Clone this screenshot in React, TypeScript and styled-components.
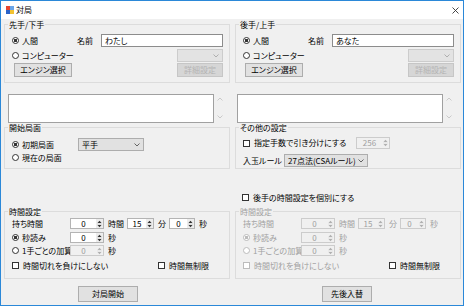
import React from "react";
import styled, { createGlobalStyle } from "styled-components";

const Global = createGlobalStyle`
  html, body { margin: 0; padding: 0; background: #ffffff; }
  body {
    font-family: "Noto Sans CJK JP", "Noto Sans", sans-serif;
    font-size: 8px;
    line-height: 1;
    font-feature-settings: "palt" 1;
    color: #000;
  }
  * { box-sizing: border-box; }
`;

const Window = styled.div`
  width: 464px;
  height: 306px;
  border: 1px solid #2b88d8;
  background: #f0f0f0;
  display: flex;
  flex-direction: column;
`;

const TitleBar = styled.div`
  height: 18px;
  flex: none;
  background: #ffffff;
  display: flex;
  align-items: center;
  padding: 0 4px 0 5px;
`;

const Title = styled.span`
  margin-left: 2px;
  font-size: 8px;
  flex: 1;
`;

const Client = styled.div`
  flex: 1;
  display: grid;
  grid-template-columns: 226px 226px;
  grid-template-rows: 63px 40px 46px 38px 72px 26px;
  column-gap: 5px;
  padding: 1px 2px 0 3px;
`;

const GroupBox = styled.fieldset`
  margin: 0;
  padding: 0 6px 0 7px;
  border: 1px solid #dcdcdc;
  border-radius: 0;
  min-width: 0;
  height: 100%;
`;

const Legend = styled.legend<{ $disabled?: boolean }>`
  padding: 0 1px;
  margin-left: -4px;
  line-height: 9px;
  height: 9px;
  font-size: 8px;
  color: ${(p) => (p.$disabled ? "#a0a0a0" : "#000")};
`;

const Row = styled.div<{ $mt?: number; $h: number }>`
  display: flex;
  align-items: center;
  margin-top: ${(p) => p.$mt ?? 0}px;
  height: ${(p) => p.$h}px;
`;

const Opt = styled.span<{ $w?: number; $disabled?: boolean }>`
  display: inline-flex;
  align-items: center;
  white-space: nowrap;
  width: ${(p) => (p.$w ? `${p.$w}px` : "auto")};
  flex: ${(p) => (p.$w ? "none" : "1")};
  color: ${(p) => (p.$disabled ? "#a0a0a0" : "#000")};
`;

const RadioDot = styled.span<{ $checked?: boolean; $disabled?: boolean }>`
  width: 7px;
  height: 7px;
  flex: none;
  border-radius: 50%;
  border: 1px solid ${(p) => (p.$disabled ? "#bcbcbc" : "#333333")};
  background: ${(p) =>
    p.$checked
      ? `radial-gradient(circle, ${p.$disabled ? "#bcbcbc" : "#333"} 0 1.4px, #fff 1.9px)`
      : "#fff"};
  margin-right: 3px;
`;

const CheckBox = styled.span<{ $disabled?: boolean }>`
  width: 7px;
  height: 7px;
  flex: none;
  border: 1px solid ${(p) => (p.$disabled ? "#bcbcbc" : "#333333")};
  background: #fff;
  margin-right: 4px;
`;

const Text = styled.span<{ $w?: number; $ml?: number; $disabled?: boolean }>`
  display: inline-block;
  white-space: nowrap;
  width: ${(p) => (p.$w ? `${p.$w}px` : "auto")};
  margin-left: ${(p) => p.$ml ?? 0}px;
  flex: none;
  color: ${(p) => (p.$disabled ? "#a0a0a0" : "#000")};
`;

const TextBox = styled.span<{ $w: number }>`
  display: flex;
  align-items: center;
  width: ${(p) => p.$w}px;
  height: 100%;
  flex: none;
  border: 1px solid #8c8c8c;
  background: #fff;
  padding-left: 3px;
`;

const Combo = styled.span<{ $w: number; $disabled?: boolean; $ml?: number }>`
  display: flex;
  align-items: center;
  width: ${(p) => p.$w}px;
  height: 100%;
  flex: none;
  margin-left: ${(p) => p.$ml ?? 0}px;
  border: 1px solid ${(p) => (p.$disabled ? "#cccccc" : "#adadad")};
  background: ${(p) => (p.$disabled ? "#e3e3e3" : "#e1e1e1")};
  padding: 0 3px 0 3px;
  color: #000;
`;

const ComboText = styled.span`
  flex: 1;
  white-space: nowrap;
  line-height: 10px;
`;

const Btn = styled.button<{ $w: number; $ml?: number; $disabled?: boolean }>`
  width: ${(p) => p.$w}px;
  height: 100%;
  flex: none;
  margin: 0 0 0 ${(p) => p.$ml ?? 0}px;
  padding: 0;
  border: 1px solid ${(p) => (p.$disabled ? "#c6c6c6" : "#adadad")};
  background: ${(p) => (p.$disabled ? "#d6d6d6" : "#e1e1e1")};
  color: ${(p) => (p.$disabled ? "#b4b4b4" : "#000")};
  font: inherit;
  font-size: 8px;
  line-height: 1;
  font-feature-settings: "palt" 1;
`;

const Spacer = styled.span`
  flex: 1;
`;

const NumBox = styled.span<{ $w: number; $disabled?: boolean; $ml?: number }>`
  display: flex;
  width: ${(p) => p.$w}px;
  height: 100%;
  flex: none;
  margin-left: ${(p) => p.$ml ?? 0}px;
  border: 1px solid ${(p) => (p.$disabled ? "#cccccc" : "#b4b4b4")};
  background: ${(p) => (p.$disabled ? "#f0f0f0" : "#ffffff")};
  color: ${(p) => (p.$disabled ? "#a0a0a0" : "#000")};
`;

const NumText = styled.span`
  flex: 1;
  display: flex;
  align-items: center;
  justify-content: center;
`;

const Spin = styled.span<{ $disabled?: boolean }>`
  width: 7px;
  flex: none;
  display: flex;
  align-items: center;
  justify-content: center;
  background: ${(p) => (p.$disabled ? "#f0f0f0" : "#ececec")};
`;

const NotesWrap = styled.div<{ $ml: number }>`
  display: flex;
  align-items: flex-end;
  height: 100%;
  padding-left: ${(p) => p.$ml}px;
`;

const Notes = styled.div<{ $w: number }>`
  width: ${(p) => p.$w}px;
  height: 29px;
  border: 1px solid #a0a0a0;
  background: #fff;
`;

const ScrollCol = styled.div`
  width: 10px;
  height: 29px;
  display: flex;
  flex-direction: column;
  justify-content: space-between;
  align-items: center;
  padding: 3px 0 4px;
  margin-left: 1px;
`;

const CellEnd = styled.div<{ $mb: number }>`
  align-self: end;
  margin-bottom: ${(p) => p.$mb}px;
  padding-left: 7px;
`;

const BtnCell = styled.div<{ $ml: number }>`
  display: flex;
  padding-top: 7px;
  padding-bottom: 3px;
  padding-left: ${(p) => p.$ml}px;
`;

const Chevron = ({ up, color }: { up?: boolean; color: string }) => (
  <svg width="6" height="4" viewBox="0 0 6 4">
    <polyline
      points={up ? "0.5,3.5 3,1 5.5,3.5" : "0.5,0.5 3,3 5.5,0.5"}
      fill="none"
      stroke={color}
      strokeWidth="0.9"
    />
  </svg>
);

const SpinArrows = ({ disabled }: { disabled?: boolean }) => {
  const c = disabled ? "#b0b0b0" : "#333";
  return (
    <svg width="5" height="8" viewBox="0 0 5 8">
      <polygon points="2.5,0.8 4.5,3 0.5,3" fill={c} />
      <line x1="0" y1="4" x2="5" y2="4" stroke={disabled ? "#d8d8d8" : "#c8c8c8"} strokeWidth="0.6" />
      <polygon points="0.5,5 4.5,5 2.5,7.2" fill={c} />
    </svg>
  );
};

const AppIcon = () => (
  <svg width="8" height="8" viewBox="0 0 8 8">
    <rect x="0" y="0" width="4" height="4" fill="#e8452c" />
    <rect x="4" y="0" width="4" height="4" fill="#6aa5e8" />
    <rect x="0" y="4" width="4" height="4" fill="#2a63c9" />
    <rect x="4" y="4" width="4" height="4" fill="#f2c230" />
  </svg>
);

const CloseGlyph = () => (
  <svg width="7" height="7" viewBox="0 0 7 7">
    <path d="M0.5 0.5 L6.5 6.5 M6.5 0.5 L0.5 6.5" stroke="#333" strokeWidth="0.9" />
  </svg>
);

const Radio = ({
  label,
  w,
  checked,
  disabled,
}: {
  label: string;
  w?: number;
  checked?: boolean;
  disabled?: boolean;
}) => (
  <Opt $w={w} $disabled={disabled}>
    <RadioDot $checked={checked} $disabled={disabled} />
    {label}
  </Opt>
);

const Check = ({ label, w, disabled }: { label: string; w?: number; disabled?: boolean }) => (
  <Opt $w={w} $disabled={disabled}>
    <CheckBox $disabled={disabled} />
    {label}
  </Opt>
);

const Numeric = ({
  value,
  w,
  disabled,
  ml,
}: {
  value: string;
  w: number;
  disabled?: boolean;
  ml?: number;
}) => (
  <NumBox $w={w} $disabled={disabled} $ml={ml}>
    <NumText>{value}</NumText>
    <Spin $disabled={disabled}>
      <SpinArrows disabled={disabled} />
    </Spin>
  </NumBox>
);

const ComboBox = ({
  value,
  w,
  disabled,
  ml,
}: {
  value?: string;
  w: number;
  disabled?: boolean;
  ml?: number;
}) => (
  <Combo $w={w} $disabled={disabled} $ml={ml}>
    <ComboText>{value}</ComboText>
    <Chevron color={disabled ? "#a8a8a8" : "#555"} />
  </Combo>
);

const PlayerBox = ({ title, name }: { title: string; name: string }) => (
  <GroupBox>
    <Legend>{title}</Legend>
    <Row $mt={5} $h={13}>
      <Radio label="人間" w={65} checked />
      <Text $w={24}>名前</Text>
      <TextBox $w={122}>{name}</TextBox>
    </Row>
    <Row $mt={2} $h={13}>
      <Radio label="コンピューター" />
      <ComboBox w={46} disabled />
    </Row>
    <Row $mt={1} $h={14}>
      <Btn $w={58} $ml={2}>エンジン選択</Btn>
      <Spacer />
      <Btn $w={46} $disabled disabled>
        詳細設定
      </Btn>
    </Row>
  </GroupBox>
);

const NotesArea = ({ ml }: { ml: number }) => (
  <NotesWrap $ml={ml}>
    <Notes $w={206} />
    <ScrollCol>
      <Chevron up color="#c4c4c4" />
      <Chevron color="#c4c4c4" />
    </ScrollCol>
  </NotesWrap>
);

const TimeBox = ({ disabled }: { disabled?: boolean }) => (
  <GroupBox>
    <Legend $disabled={disabled}>時間設定</Legend>
    <Row $mt={2} $h={11}>
      <Text $w={58} $disabled={disabled}>
        持ち時間
      </Text>
      <Numeric value="0" w={34} disabled={disabled} />
      <Text $w={19} $ml={4} $disabled={disabled}>
        時間
      </Text>
      <Numeric value="15" w={27} disabled={disabled} />
      <Text $w={11} $ml={4} $disabled={disabled}>
        分
      </Text>
      <Numeric value="0" w={26} disabled={disabled} />
      <Text $ml={4} $disabled={disabled}>
        秒
      </Text>
    </Row>
    <Row $mt={3} $h={11}>
      <Radio label="秒読み" w={58} checked disabled={disabled} />
      <Numeric value="0" w={34} disabled={disabled} />
      <Text $ml={4} $disabled={disabled}>
        秒
      </Text>
    </Row>
    <Row $mt={2} $h={11}>
      <Radio label="1手ごとの加算" w={58} disabled={disabled} />
      <Numeric value="0" w={34} disabled />
      <Text $ml={4} $disabled={disabled}>
        秒
      </Text>
    </Row>
    <Row $mt={4} $h={11}>
      <Check label="時間切れを負けにしない" w={146} disabled={disabled} />
      <Check label="時間無制限" />
    </Row>
  </GroupBox>
);

export default function App() {
  return (
    <>
      <Global />
      <Window>
        <TitleBar>
          <AppIcon />
          <Title>対局</Title>
          <CloseGlyph />
        </TitleBar>
        <Client>
          <PlayerBox title="先手/下手" name="わたし" />
          <PlayerBox title="後手/上手" name="あなた" />

          <NotesArea ml={4} />
          <NotesArea ml={2} />

          <GroupBox>
            <Legend>開始局面</Legend>
            <Row $mt={6} $h={13}>
              <Radio label="初期局面" w={66} checked />
              <ComboBox value="平手" w={66} />
            </Row>
            <Row $h={13}>
              <Radio label="現在の局面" />
            </Row>
          </GroupBox>
          <GroupBox>
            <Legend>その他の設定</Legend>
            <Row $mt={5} $h={12}>
              <Check label="指定手数で引き分けにする" w={113} />
              <Numeric value="256" w={34} disabled />
            </Row>
            <Row $mt={5} $h={13}>
              <Text $w={41}>入玉ルール</Text>
              <ComboBox value="27点法(CSAルール)" w={84} />
            </Row>
          </GroupBox>

          <div />
          <CellEnd $mb={5}>
            <Check label="後手の時間設定を個別にする" />
          </CellEnd>

          <TimeBox />
          <TimeBox disabled />

          <BtnCell $ml={74}>
            <Btn $w={60}>対局開始</Btn>
          </BtnCell>
          <BtnCell $ml={87}>
            <Btn $w={50}>先後入替</Btn>
          </BtnCell>
        </Client>
      </Window>
    </>
  );
}
